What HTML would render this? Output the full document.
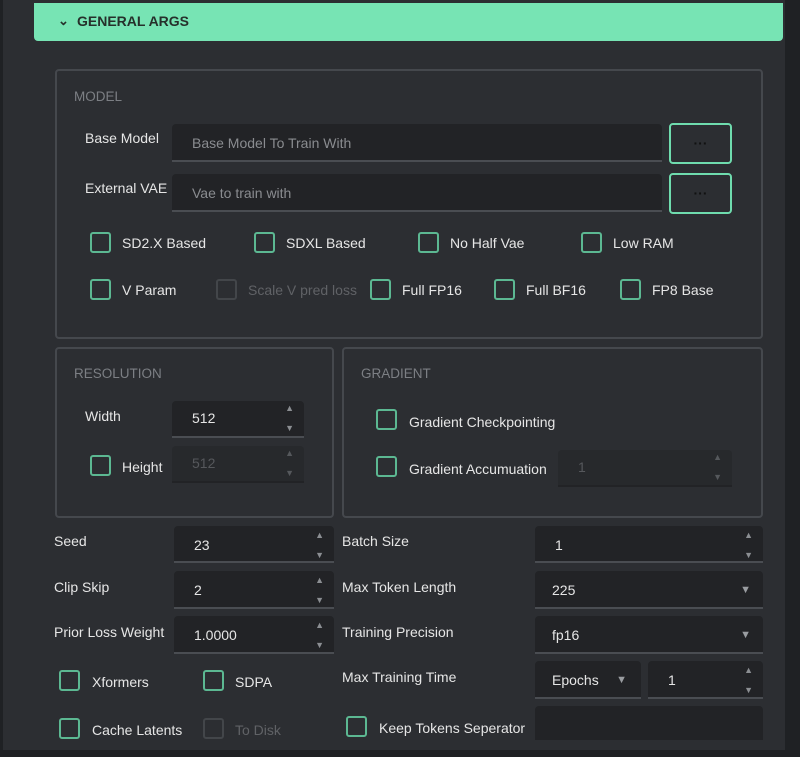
<!DOCTYPE html>
<html><head><style>
body{margin:0;width:800px;height:757px;overflow:hidden;background:#1f2124;font-family:"Liberation Sans",sans-serif;font-size:14px;color:#e6e6e6;position:relative}
.main{position:absolute;left:3px;top:0;width:782px;height:750px;background:#2c2e32}
.a{position:absolute}
.hdr{left:34px;top:3px;width:749px;height:38px;background:#77e4b4;border-radius:0 0 4px 4px;color:#26302b;font-weight:bold;font-size:14px}
.grp{border:2px solid #45484d;border-radius:4px;box-sizing:border-box}
.gt{color:#7c7f84;font-size:13.5px}
.in{background:#222326;border-bottom:2px solid #4a4d52;border-radius:4px 4px 0 0;box-sizing:border-box;padding-left:20px;line-height:34px;color:#e6e6e6}
.ph{color:#8a8c90}
.dis{background:#27292c;border-bottom-color:#222326;color:#56585c}
.cb{width:21px;height:21px;border:2px solid #5cb892;border-radius:3px;box-sizing:border-box}
.cbd{border-color:#43464a}
.lbl{color:#e6e6e6}
.dl{color:#606266}
.btn{border:2px solid #6fdcae;border-radius:4px;box-sizing:border-box;text-align:center;line-height:30px;color:#111;font-weight:bold;background:#2c2e32}
.sp{position:absolute;right:10px;font-size:9px;color:#8b8e92}
.dd{position:absolute;right:12px;top:0;font-size:11px;color:#9a9da1}
</style></head><body>
<div class="main"></div>
<div class="a hdr"><span class="a" style="left:24px;top:10px;font-size:13px">&#8964;</span><span class="a" style="left:43px;top:10px">GENERAL ARGS</span></div>

<div class="a grp" style="left:55px;top:69px;width:708px;height:270px"></div>
<div class="a gt" style="left:74px;top:89px">MODEL</div>
<div class="a lbl" style="left:85px;top:130px">Base Model</div>
<div class="a in" style="left:172px;top:124px;width:490px;height:38px;line-height:38px"><span class="ph">Base Model To Train With</span></div>
<div class="a btn" style="left:669px;top:123px;width:63px;height:41px;line-height:36px">···</div>
<div class="a lbl" style="left:85px;top:180px">External VAE</div>
<div class="a in" style="left:172px;top:174px;width:490px;height:38px;line-height:38px"><span class="ph">Vae to train with</span></div>
<div class="a btn" style="left:669px;top:173px;width:63px;height:41px;line-height:36px">···</div>

<div class="a cb" style="left:90px;top:232px"></div><div class="a lbl" style="left:122px;top:235px">SD2.X Based</div>
<div class="a cb" style="left:254px;top:232px"></div><div class="a lbl" style="left:286px;top:235px">SDXL Based</div>
<div class="a cb" style="left:418px;top:232px"></div><div class="a lbl" style="left:450px;top:235px">No Half Vae</div>
<div class="a cb" style="left:581px;top:232px"></div><div class="a lbl" style="left:613px;top:235px">Low RAM</div>
<div class="a cb" style="left:90px;top:279px"></div><div class="a lbl" style="left:122px;top:282px">V Param</div>
<div class="a cb cbd" style="left:216px;top:279px"></div><div class="a dl" style="left:248px;top:282px">Scale V pred loss</div>
<div class="a cb" style="left:370px;top:279px"></div><div class="a lbl" style="left:402px;top:282px">Full FP16</div>
<div class="a cb" style="left:494px;top:279px"></div><div class="a lbl" style="left:526px;top:282px">Full BF16</div>
<div class="a cb" style="left:620px;top:279px"></div><div class="a lbl" style="left:652px;top:282px">FP8 Base</div>

<div class="a grp" style="left:55px;top:347px;width:279px;height:171px"></div>
<div class="a gt" style="left:74px;top:366px">RESOLUTION</div>
<div class="a lbl" style="left:85px;top:408px">Width</div>
<div class="a in" style="left:172px;top:401px;width:132px;height:37px">512<span class="sp" style="top:-10px">▲</span><span class="sp" style="top:10px">▼</span></div>
<div class="a cb" style="left:90px;top:455px"></div><div class="a lbl" style="left:122px;top:459px">Height</div>
<div class="a in dis" style="left:172px;top:446px;width:132px;height:37px">512<span class="sp" style="top:-10px;color:#55585c">▲</span><span class="sp" style="top:10px;color:#55585c">▼</span></div>

<div class="a grp" style="left:342px;top:347px;width:421px;height:171px"></div>
<div class="a gt" style="left:361px;top:366px">GRADIENT</div>
<div class="a cb" style="left:376px;top:409px"></div><div class="a lbl" style="left:409px;top:414px">Gradient Checkpointing</div>
<div class="a cb" style="left:376px;top:456px"></div><div class="a lbl" style="left:409px;top:461px">Gradient Accumuation</div>
<div class="a in dis" style="left:558px;top:450px;width:174px;height:37px">1<span class="sp" style="top:-10px;color:#55585c">▲</span><span class="sp" style="top:10px;color:#55585c">▼</span></div>

<div class="a lbl" style="left:54px;top:533px">Seed</div>
<div class="a in" style="left:174px;top:526px;width:160px;height:37px;line-height:38px">23<span class="sp" style="top:-10px">▲</span><span class="sp" style="top:10px">▼</span></div>
<div class="a lbl" style="left:54px;top:579px">Clip Skip</div>
<div class="a in" style="left:174px;top:571px;width:160px;height:38px;line-height:38px">2<span class="sp" style="top:-10px">▲</span><span class="sp" style="top:10px">▼</span></div>
<div class="a lbl" style="left:54px;top:624px">Prior Loss Weight</div>
<div class="a in" style="left:174px;top:616px;width:160px;height:38px;line-height:38px">1.0000<span class="sp" style="top:-10px">▲</span><span class="sp" style="top:10px">▼</span></div>
<div class="a cb" style="left:59px;top:670px"></div><div class="a lbl" style="left:92px;top:674px">Xformers</div>
<div class="a cb" style="left:203px;top:670px"></div><div class="a lbl" style="left:235px;top:674px">SDPA</div>
<div class="a cb" style="left:59px;top:718px"></div><div class="a lbl" style="left:92px;top:722px">Cache Latents</div>
<div class="a cb cbd" style="left:203px;top:718px"></div><div class="a dl" style="left:235px;top:722px">To Disk</div>

<div class="a lbl" style="left:342px;top:533px">Batch Size</div>
<div class="a in" style="left:535px;top:526px;width:228px;height:37px;line-height:38px">1<span class="sp" style="top:-10px">▲</span><span class="sp" style="top:10px">▼</span></div>
<div class="a lbl" style="left:342px;top:579px">Max Token Length</div>
<div class="a in" style="left:535px;top:571px;width:228px;height:38px;line-height:38px;padding-left:17px">225<span class="dd">▼</span></div>
<div class="a lbl" style="left:342px;top:624px">Training Precision</div>
<div class="a in" style="left:535px;top:616px;width:228px;height:38px;line-height:38px;padding-left:17px">fp16<span class="dd">▼</span></div>
<div class="a lbl" style="left:342px;top:669px">Max Training Time</div>
<div class="a in" style="left:535px;top:661px;width:106px;height:38px;line-height:38px;padding-left:17px">Epochs<span class="dd" style="right:14px">▼</span></div>
<div class="a in" style="left:648px;top:661px;width:115px;height:38px;line-height:38px">1<span class="sp" style="top:-10px">▲</span><span class="sp" style="top:10px">▼</span></div>
<div class="a cb" style="left:346px;top:716px"></div><div class="a lbl" style="left:379px;top:720px">Keep Tokens Seperator</div>
<div class="a in" style="left:535px;top:706px;width:228px;height:34px;border-bottom:none"></div>
</body></html>
